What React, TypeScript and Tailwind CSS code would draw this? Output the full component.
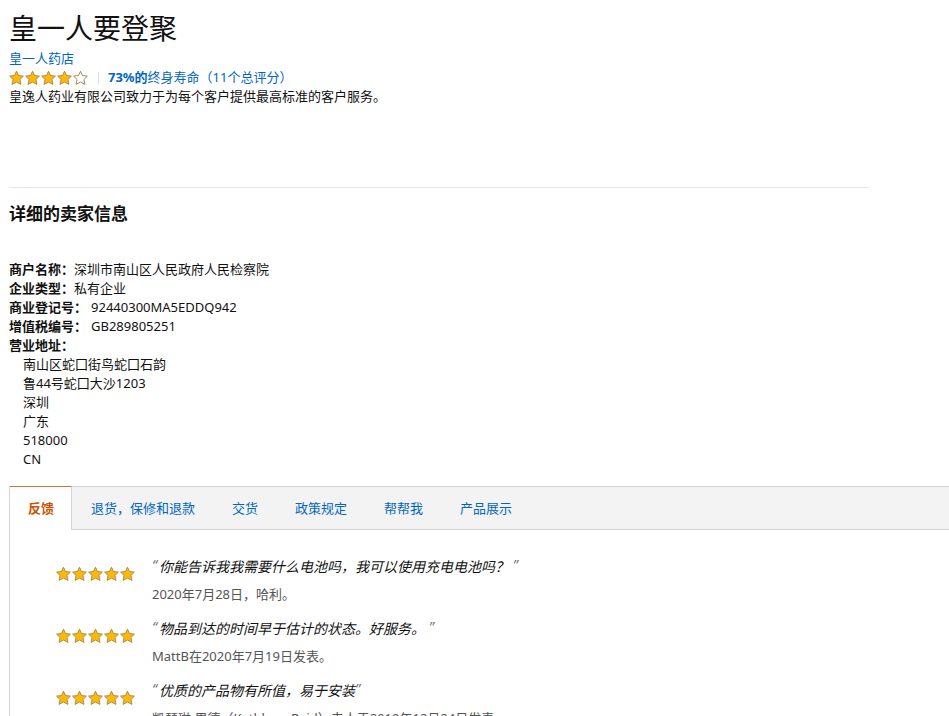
import clsx from 'clsx'

const details = [
    { label: '商户名称：', value: '深圳市南山区人民政府人民检察院' },
    { label: '企业类型：', value: '私有企业' },
    { label: '商业登记号：', value: '92440300MA5EDDQ942', spaced: true },
    { label: '增值税编号：', value: 'GB289805251', spaced: true },
    { label: '营业地址：', value: '' },
]

const address = ['南山区蛇囗街鸟蛇囗石韵', '鲁44号蛇囗大沙1203', '深圳', '广东', '518000', 'CN']

const tabs = ['反馈', '退货，保修和退款', '交货', '政策规定', '帮帮我', '产品展示']

// some quotes were submitted with a trailing space
const reviews = [
    { text: '你能告诉我我需要什么电池吗，我可以使用充电电池吗？ ', by: '2020年7月28日，哈利。' },
    { text: '物品到达的时间早于估计的状态。好服务。 ', by: 'MattB在2020年7月19日发表。' },
    { text: '优质的产品物有所值，易于安装', by: '凯瑟琳·里德（Kathleen Reid）夫人于2019年12月24日发表' },
]

function Stars({ rating }: { rating: number }) {
    return (
        <div className="flex shrink-0" role="img" aria-label={`${rating} / 5`}>
            {[1, 2, 3, 4, 5].map((n) => (
                <svg key={n} viewBox="0 0 16 16" className="size-4">
                    <path
                        d="M7.5 1.2 9.5 5.6 14.4 6.1 10.9 9.5 12 14.4 7.5 12 3 14.4 4.1 9.5 .6 6.1 5.5 5.6z"
                        fill={n <= rating ? '#fdb90a' : '#ffffff'}
                        stroke={n <= rating ? '#b98a3c' : '#a88a52'}
                        strokeWidth="1"
                        strokeLinejoin="round"
                    />
                </svg>
            ))}
        </div>
    )
}

export default function App() {
    return (
        <div className="min-h-screen bg-white pl-[9px] pt-2 font-['Noto_Sans','Noto_Sans_CJK_SC',sans-serif] text-[13px] leading-[19px] text-[#111111]">
            <header>
                <h1 className="text-[28px] leading-[41px]">皇一人要登聚</h1>
                <a href="#store" className="block text-[#0066c0]">皇一人药店</a>
                <div className="flex items-center">
                    <Stars rating={4} />
                    <div className="ml-[9px] mr-[9px] h-3 w-px bg-[#dddddd]" />
                    <a href="#feedback" className="text-[#0066c0]">
                        <b>73%的</b>终身寿命（11个总评分）
                    </a>
                </div>
                <p>皇逸人药业有限公司致力于为每个客户提供最高标准的客户服务。</p>
            </header>

            <hr className="mr-20 mt-[81px] border-[#e7e7e7]" />

            <section>
                <h2 className="mt-[14px] text-[17px] font-bold leading-6">详细的卖家信息</h2>
                <ul className="mt-[34px]">
                    {details.map((item) => (
                        <li key={item.label} className="flex">
                            <b>{item.label}</b>
                            <span className={clsx(item.spaced && 'ml-1')}>{item.value}</span>
                        </li>
                    ))}
                </ul>
                <ul className="pl-[14px]">
                    {address.map((line) => (
                        <li key={line}>{line}</li>
                    ))}
                </ul>
            </section>

            <section className="mt-[17px]">
                <nav className="flex h-11 gap-px border-y border-l border-[#d5d5d5] bg-[#f3f3f3]">
                    {tabs.map((tab, i) => (
                        <button
                            key={tab}
                            type="button"
                            className={clsx(
                                'pl-[18px]',
                                i === 0
                                    ? '-my-px border-r border-t border-r-[#d5d5d5] border-t-[#cc7722] bg-white pr-[17px] font-bold text-[#c45500]'
                                    : 'pr-[18px] text-[#0066c0]',
                            )}
                        >
                            {tab}
                        </button>
                    ))}
                </nav>
                <div className="border-l border-[#d5d5d5] pb-6 pl-[46px] pt-[27px]">
                    {reviews.map((review) => (
                        <div key={review.text} className="flex h-[62px] gap-4">
                            <div className="pt-[9px]">
                                <Stars rating={5} />
                            </div>
                            <div>
                                <p className="text-sm italic leading-5">
                                    <span className="mr-0.5 align-[2px] leading-none text-[#767676]">“</span>
                                    {review.text}
                                    <span className="align-[2px] leading-none text-[#767676]">”</span>
                                </p>
                                <p className="mt-2 text-[#555555]">{review.by}</p>
                            </div>
                        </div>
                    ))}
                </div>
            </section>
        </div>
    )
}
